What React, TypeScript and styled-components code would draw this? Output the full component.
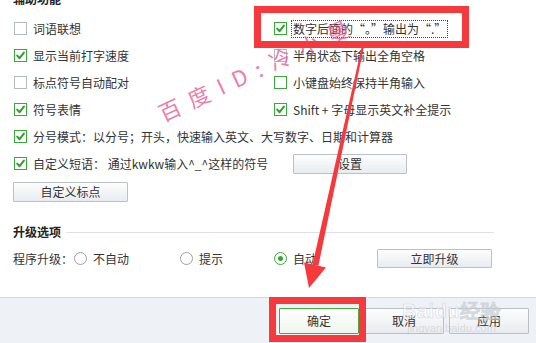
import styled, { createGlobalStyle } from "styled-components";

const GlobalStyle = createGlobalStyle`
  html, body {
    margin: 0;
    padding: 0;
    background: #fff;
  }
`;

const Page = styled.div`
  position: relative;
  width: 536px;
  height: 343px;
  overflow: hidden;
  background: #fff;
  display: flex;
  flex-direction: column;
  font-family: "Noto Sans CJK SC", "Microsoft YaHei", sans-serif;
  font-size: 12px;
  color: #333;
`;

const Main = styled.div`
  height: 308px;
  margin-top: -11px;
  padding: 0 42px 0 13px;
  display: flex;
  flex-direction: column;
  flex-shrink: 0;
`;

const SectionHeader = styled.div<{ $top?: number }>`
  display: flex;
  align-items: center;
  gap: 5px;
  height: 20px;
  margin-top: ${(p) => p.$top ?? 0}px;
  font-weight: bold;
  color: #222;
  line-height: 20px;

  &::after {
    content: "";
    flex: 1;
    height: 1px;
    background: #dcdfe4;
  }
`;

const OptionsGrid = styled.div`
  display: grid;
  grid-template-columns: 260px 1fr;
  grid-auto-rows: 27px;
  padding-top: 6px;
`;

const Option = styled.label<{ $wide?: boolean }>`
  display: flex;
  align-items: center;
  gap: 6px;
  padding-left: 1px;
  white-space: nowrap;
  line-height: 16px;
  grid-column: ${(p) => (p.$wide ? "1 / -1" : "auto")};
`;

const FocusText = styled.span`
  margin-left: -1px;
  padding: 0 1px;
  outline: 1px dotted #444;
`;

const Box = styled.span<{ $checked?: boolean; $green?: boolean }>`
  display: inline-flex;
  align-items: center;
  justify-content: center;
  width: 13px;
  height: 13px;
  box-sizing: border-box;
  flex-shrink: 0;
  border: 1px solid ${(p) => (p.$checked || p.$green ? "#3aa83a" : "#b4bac2")};
  background: #fff;
`;

const Checkbox = ({ checked, green }: { checked?: boolean; green?: boolean }) => (
  <Box $checked={checked} $green={green}>
    {checked && (
      <svg width="11" height="11" viewBox="0 0 11 11">
        <path
          d="M2.2 5.6 L4.6 8.2 L8.9 2.6"
          fill="none"
          stroke="#2f9f2f"
          strokeWidth="2"
          strokeLinecap="round"
          strokeLinejoin="round"
        />
      </svg>
    )}
  </Box>
);

const ButtonRow = styled.div`
  display: flex;
  align-items: center;
  grid-column: 1 / -1;
`;

const PhraseCell = styled.div`
  width: 280px;
`;

const Button = styled.button<{ $w: number; $h: number; $primary?: boolean }>`
  width: ${(p) => p.$w}px;
  height: ${(p) => p.$h}px;
  padding: 0;
  box-sizing: border-box;
  border: 1px solid ${(p) => (p.$primary ? "#45ad3c" : "#b9c0c8")};
  border-radius: 1px;
  background: ${(p) =>
    p.$primary
      ? "linear-gradient(#ffffff, #eef5ec)"
      : "linear-gradient(#fdfdfe, #e8ecf0)"};
  font-family: inherit;
  font-size: 12px;
  color: #333;
  line-height: 1;
  flex-shrink: 0;
`;

const StandaloneButton = styled(Button)`
  margin-top: 5px;
`;

const RadioRow = styled.div`
  display: flex;
  align-items: center;
  height: 27px;
  margin-top: 3px;
  white-space: nowrap;
`;

const RowLabel = styled.span`
  width: 61px;
`;

const RadioOption = styled.label<{ $w: number }>`
  display: flex;
  align-items: center;
  gap: 6px;
  width: ${(p) => p.$w}px;
`;

const RadioDot = styled.span<{ $checked?: boolean }>`
  width: 13px;
  height: 13px;
  box-sizing: border-box;
  border-radius: 50%;
  border: 1px solid ${(p) => (p.$checked ? "#3aa83a" : "#9aa1a9")};
  display: inline-flex;
  align-items: center;
  justify-content: center;
  background: #fff;

  &::after {
    content: "";
    display: ${(p) => (p.$checked ? "block" : "none")};
    width: 5px;
    height: 5px;
    border-radius: 50%;
    background: #35a735;
  }
`;

const Footer = styled.div`
  height: 46px;
  flex-shrink: 0;
  box-sizing: border-box;
  border-top: 1px solid #d3d9e1;
  background: #eef1f6;
  display: flex;
  align-items: center;
  gap: 5px;
  padding-left: 279px;
`;

const Highlight = styled.div<{ $x: number; $y: number; $w: number; $h: number }>`
  position: absolute;
  left: ${(p) => p.$x}px;
  top: ${(p) => p.$y}px;
  width: ${(p) => p.$w}px;
  height: ${(p) => p.$h}px;
  box-sizing: border-box;
  border: 7px solid #f5393c;
  pointer-events: none;
`;

const Overlay = styled.svg`
  position: absolute;
  left: 0;
  top: 0;
  pointer-events: none;
`;

const Signature = styled.div`
  position: absolute;
  left: 166px;
  top: 96px;
  transform: rotate(-25deg);
  transform-origin: left bottom;
  font-size: 22px;
  font-weight: 400;
  letter-spacing: 10px;
  color: rgba(230, 92, 148, 0.8);
  white-space: nowrap;
  pointer-events: none;
`;

const BaiduMark = styled.div`
  position: absolute;
  left: 402px;
  top: 300px;
  display: flex;
  flex-direction: column;
  align-items: center;
  color: rgba(255, 255, 255, 0.45);
  -webkit-text-stroke: 0.6px rgba(175, 181, 189, 0.5);
  pointer-events: none;
`;

const BaiduTitle = styled.div`
  font-family: "Liberation Sans", sans-serif;
  font-size: 20px;
  font-weight: bold;
  line-height: 22px;
  letter-spacing: 0.5px;
`;

const BaiduUrl = styled.div`
  font-family: "Liberation Sans", sans-serif;
  font-size: 11px;
  line-height: 12px;
  -webkit-text-stroke: 0;
  color: rgba(160, 166, 174, 0.3);
`;

export default function App() {
  return (
    <>
      <GlobalStyle />
      <Page>
        <Main>
          <SectionHeader>辅助功能</SectionHeader>
          <OptionsGrid>
            <Option>
              <Checkbox />
              词语联想
            </Option>
            <Option>
              <Checkbox checked />
              <FocusText>数字后面的“。”输出为“.”</FocusText>
            </Option>
            <Option>
              <Checkbox checked />
              显示当前打字速度
            </Option>
            <Option>
              <Checkbox />
              半角状态下输出全角空格
            </Option>
            <Option>
              <Checkbox />
              标点符号自动配对
            </Option>
            <Option>
              <Checkbox green />
              小键盘始终保持半角输入
            </Option>
            <Option>
              <Checkbox checked />
              符号表情
            </Option>
            <Option>
              <Checkbox checked />
              Shift + 字母显示英文补全提示
            </Option>
            <Option $wide>
              <Checkbox checked />
              分号模式：以分号；开头，快速输入英文、大写数字、日期和计算器
            </Option>
            <ButtonRow>
              <PhraseCell>
                <Option>
                  <Checkbox checked />
                  自定义短语： 通过kwkw输入^_^这样的符号
                </Option>
              </PhraseCell>
              <Button $w={114} $h={20}>
                设置
              </Button>
            </ButtonRow>
          </OptionsGrid>
          <StandaloneButton $w={115} $h={20}>
            自定义标点
          </StandaloneButton>

          <SectionHeader $top={20}>升级选项</SectionHeader>
          <RadioRow>
            <RowLabel>程序升级：</RowLabel>
            <RadioOption $w={106}>
              <RadioDot />
              不自动
            </RadioOption>
            <RadioOption $w={94}>
              <RadioDot />
              提示
            </RadioOption>
            <RadioOption $w={103}>
              <RadioDot $checked />
              自动
            </RadioOption>
            <Button $w={115} $h={19}>
              立即升级
            </Button>
          </RadioRow>
        </Main>

        <Footer>
          <Button $w={80} $h={26} $primary>
            确定
          </Button>
          <Button $w={80} $h={26}>
            取消
          </Button>
          <Button $w={80} $h={26}>
            应用
          </Button>
        </Footer>

        <Signature>百度ID:冷小曼</Signature>

        <BaiduMark>
          <BaiduTitle>Baidu经验</BaiduTitle>
          <BaiduUrl>jingyan.baidu.com</BaiduUrl>
        </BaiduMark>

        <Highlight $x={254} $y={6} $w={215} $h={42} />
        <Highlight $x={269} $y={297} $w={97} $h={45} />

        <Overlay width="536" height="343" viewBox="0 0 536 343">
          <polygon
            points="362.4,43.8 364.4,44.2 318.4,265.7 312.6,264.3"
            fill="#f5393c"
          />
          <polygon points="304,262.5 326,267.5 309,288" fill="#f5393c" />
        </Overlay>
      </Page>
    </>
  );
}
